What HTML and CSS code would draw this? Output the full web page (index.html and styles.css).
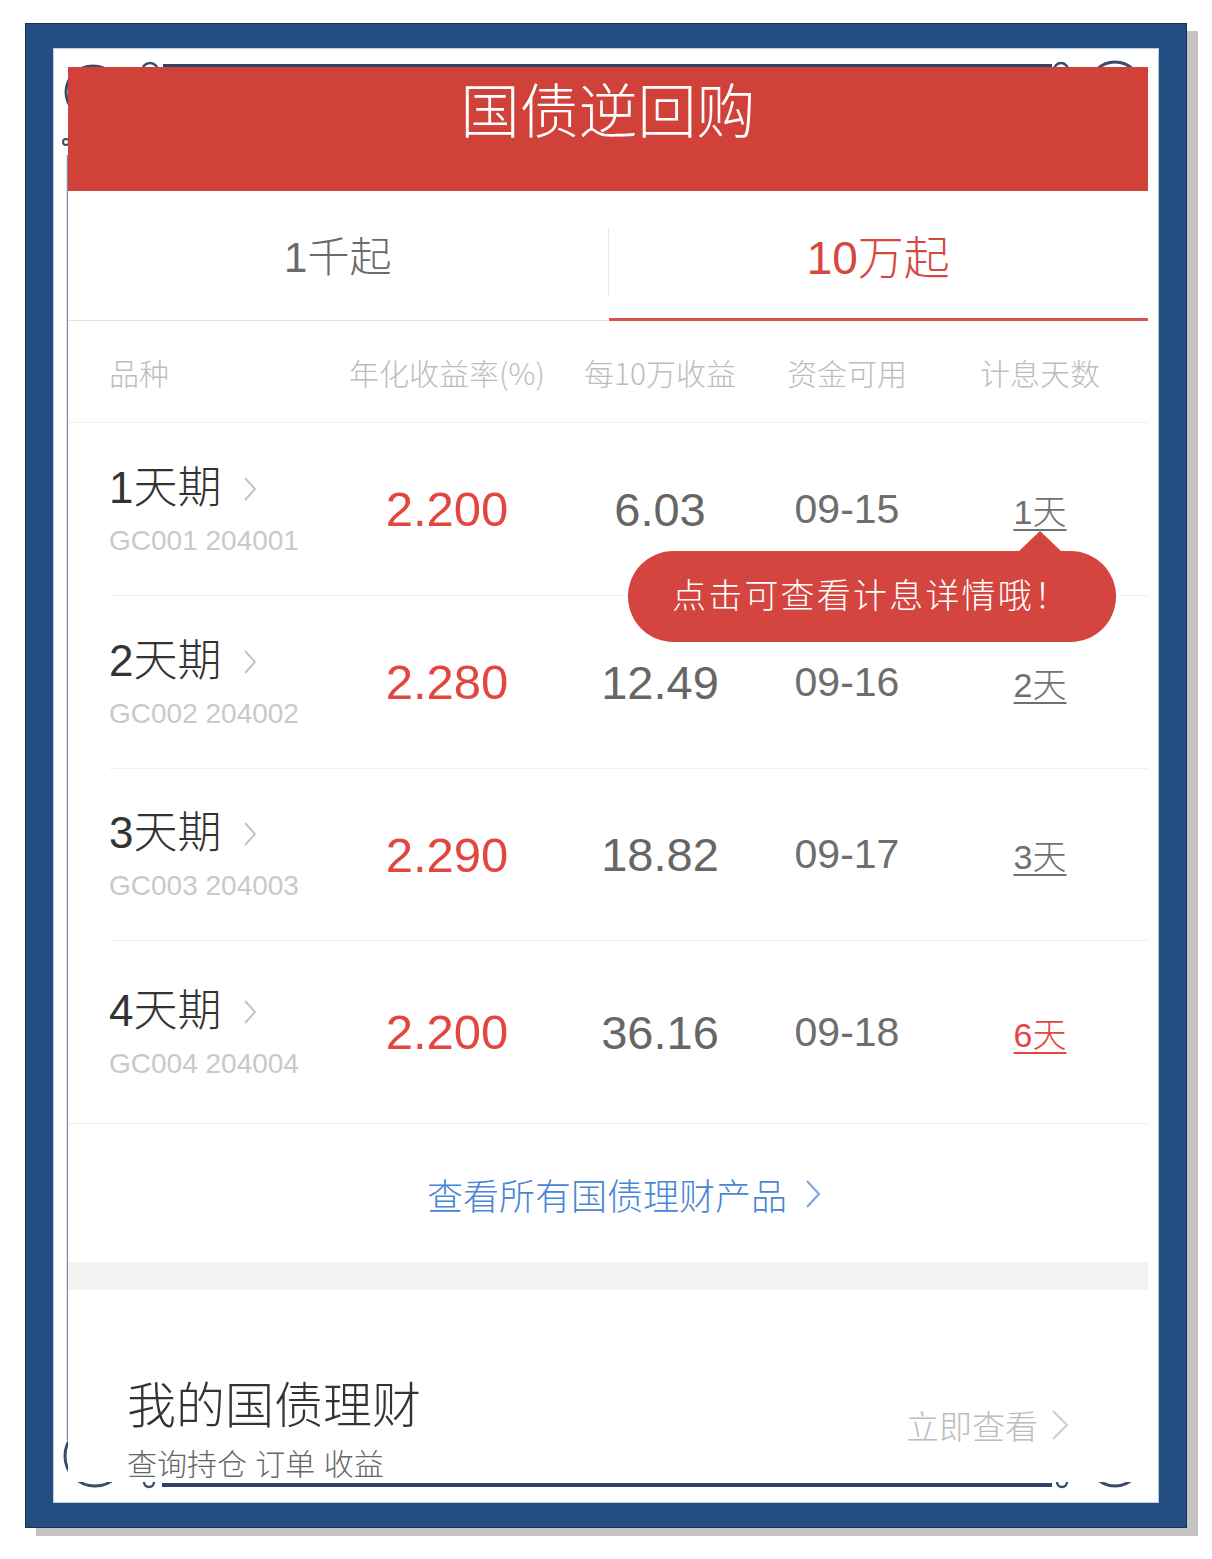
FILE: index.html
```html
<!DOCTYPE html>
<html lang="zh-CN">
<head>
<meta charset="utf-8">
<title>国债逆回购</title>
<link rel="stylesheet" href="styles.css">
</head>
<body>
<div class="frame">
  <div class="inner">
    <svg class="deco" width="1106" height="1455" viewBox="0 0 1106 1455" aria-hidden="true">
      <line x1="110" y1="17.5" x2="999" y2="17.5" stroke="#2d4466" stroke-width="3"/>
      <ellipse cx="40" cy="44" rx="27" ry="26" fill="none" stroke="#3b4c6b" stroke-width="3"/>
      <circle cx="97" cy="23" r="8" fill="none" stroke="#3b4c6b" stroke-width="2.5"/>
      <circle cx="13" cy="94" r="3" fill="none" stroke="#3b4c6b" stroke-width="2"/>
      <circle cx="1008" cy="22" r="7" fill="none" stroke="#3b4c6b" stroke-width="2.5"/>
      <ellipse cx="1062" cy="38" rx="25" ry="24" fill="none" stroke="#3b4c6b" stroke-width="3"/>
      <line x1="14.5" y1="107" x2="14.5" y2="1392" stroke="#7d8da8" stroke-width="1.5"/>
      <line x1="109" y1="1437" x2="999" y2="1437" stroke="#2d4466" stroke-width="4"/>
      <ellipse cx="42" cy="1408" rx="30" ry="30" fill="none" stroke="#3b4c6b" stroke-width="3"/>
      <circle cx="96" cy="1434" r="5" fill="none" stroke="#3b4c6b" stroke-width="2.5"/>
      <circle cx="1009" cy="1434" r="5" fill="none" stroke="#3b4c6b" stroke-width="2.5"/>
      <ellipse cx="1062" cy="1408" rx="28" ry="30" fill="none" stroke="#3b4c6b" stroke-width="3"/>
    </svg>
    <div class="phone">
      <header class="top">国债逆回购</header>
      <nav class="tabs">
        <div class="tab">1千起</div>
        <div class="tab-divider"></div>
        <div class="tab active">10万起</div>
      </nav>
      <div class="cols">
        <div class="c1">品种</div>
        <div class="cc">年化收益率(%)</div>
        <div class="cc">每10万收益</div>
        <div class="cc">资金可用</div>
        <div class="cc">计息天数</div>
      </div>
      <div class="list">
        <div class="row">
          <div class="name-cell">
            <div class="name">1天期<svg class="chev" width="14" height="26" viewBox="0 0 14 26"><path d="M2 2 L12 13 L2 24" fill="none" stroke="#c4c4c4" stroke-width="2"/></svg></div>
            <div class="code">GC001 204001</div>
          </div>
          <div class="val rate">2.200</div>
          <div class="val gain">6.03</div>
          <div class="val date">09-15</div>
          <div class="val"><span class="days">1天</span></div>
        </div>
        <div class="row">
          <div class="name-cell">
            <div class="name">2天期<svg class="chev" width="14" height="26" viewBox="0 0 14 26"><path d="M2 2 L12 13 L2 24" fill="none" stroke="#c4c4c4" stroke-width="2"/></svg></div>
            <div class="code">GC002 204002</div>
          </div>
          <div class="val rate">2.280</div>
          <div class="val gain">12.49</div>
          <div class="val date">09-16</div>
          <div class="val"><span class="days">2天</span></div>
        </div>
        <div class="row">
          <div class="name-cell">
            <div class="name">3天期<svg class="chev" width="14" height="26" viewBox="0 0 14 26"><path d="M2 2 L12 13 L2 24" fill="none" stroke="#c4c4c4" stroke-width="2"/></svg></div>
            <div class="code">GC003 204003</div>
          </div>
          <div class="val rate">2.290</div>
          <div class="val gain">18.82</div>
          <div class="val date">09-17</div>
          <div class="val"><span class="days">3天</span></div>
        </div>
        <div class="row last">
          <div class="name-cell">
            <div class="name">4天期<svg class="chev" width="14" height="26" viewBox="0 0 14 26"><path d="M2 2 L12 13 L2 24" fill="none" stroke="#c4c4c4" stroke-width="2"/></svg></div>
            <div class="code">GC004 204004</div>
          </div>
          <div class="val rate">2.200</div>
          <div class="val gain">36.16</div>
          <div class="val date">09-18</div>
          <div class="val"><span class="days red">6天</span></div>
        </div>
      </div>
      <div class="more">查看所有国债理财产品<svg class="chev-blue" width="16" height="30" viewBox="0 0 16 30"><path d="M2 2 L14 15 L2 28" fill="none" stroke="#7ea7e0" stroke-width="2.2"/></svg></div>
      <div class="band"></div>
      <div class="mine">
        <div class="mine-text">
          <div class="mine-title">我的国债理财</div>
          <div class="mine-sub">查询持仓 订单 收益</div>
        </div>
        <div class="mine-link">立即查看<svg class="chev-gray" width="20" height="32" viewBox="0 0 20 32"><path d="M3 2 L17 16 L3 30" fill="none" stroke="#cfcfcf" stroke-width="2.2"/></svg></div>
      </div>
      <div class="tip">点击可查看计息详情哦！</div>
    </div>
  </div>
</div>
</body>
</html>
```
FILE: styles.css
```css
* { box-sizing: border-box; }
html, body { margin: 0; padding: 0; background: #ffffff; }
body {
  font-family: "Liberation Sans", "Noto Sans CJK SC", sans-serif;
  width: 1212px;
  height: 1559px;
  overflow: hidden;
}
.frame {
  margin: 23px 0 0 25px;
  width: 1162px;
  height: 1505px;
  background: #244d82;
  border: 1px solid #1c3150;
  padding: 24px 27px 24px 27px;
  box-shadow: 11px 8px 0 0 #c3c3c3;
}
.inner {
  position: relative;
  width: 1106px;
  height: 1455px;
  background: #ffffff;
  box-shadow: inset 0 0 0 1px #b9cfe6;
  padding: 19px 11px 21px 15px;
}
.deco { position: absolute; left: 0; top: 0; z-index: 0; }
.phone {
  position: relative;
  z-index: 1;
  width: 1080px;
  background: #ffffff;
}
.top {
  height: 124px;
  background: #cf4139;
  color: #ffffff;
  font-family: "Noto Sans CJK SC", sans-serif;
  font-weight: 300;
  font-size: 59px;
  line-height: 60px;
  text-align: center;
  padding-top: 11px;
}
.tabs {
  display: flex;
  height: 130px;
}
.tab {
  flex: 1;
  display: flex;
  align-items: center;
  justify-content: center;
  border-bottom: 1px solid #e4e4e4;
  color: #6a6a6a;
  font-size: 42px;
  font-weight: 300;
  padding-bottom: 4px;
}
.tab.active {
  color: #d6473f;
  font-size: 46px;
  border-bottom: 3px solid #d9524b;
  padding-bottom: 2px;
}
.tab-divider {
  width: 1px;
  height: 68px;
  margin-top: 38px;
  background: #e6e6e6;
}
.cols, .row {
  display: grid;
  grid-template-columns: 226px 224px 202px 172px 214px;
  align-items: center;
}
.cols {
  height: 102px;
  padding-left: 41px;
  border-bottom: 1px solid #f1f1f1;
  color: #bdbdbd;
  font-family: "Noto Sans CJK SC", sans-serif;
  font-size: 30px;
  font-weight: 300;
  white-space: nowrap;
}
.cc { text-align: center; }
.list { padding-left: 41px; }
.row {
  height: 173px;
  border-bottom: 1px solid #f1f1f1;
}
.row:nth-child(3) { height: 172px; }
.row.last { height: 182px; border-bottom: none; }
.name {
  display: flex;
  align-items: center;
  font-size: 44px;
  line-height: 56px;
  color: #333333;
  font-weight: 300;
  white-space: nowrap;
}
.chev { margin-left: 22px; margin-top: 2px; }
.code {
  margin-top: 7px;
  font-size: 28px;
  line-height: 36px;
  color: #c9c9c9;
  white-space: nowrap;
}
.val {
  text-align: center;
  color: #666666;
  white-space: nowrap;
}
.rate { font-size: 49px; color: #e2463f; }
.gain { font-size: 47px; color: #666666; }
.date { font-size: 41px; color: #6e6e6e; }
.days {
  font-size: 34px;
  color: #707070;
  text-decoration: underline;
  text-underline-offset: 5px;
  text-decoration-thickness: 2px;
  font-weight: 300;
}
.days.red { color: #e2463f; }
.more {
  height: 139px;
  border-top: 1px solid #f1f1f1;
  display: flex;
  align-items: center;
  justify-content: center;
  color: #4a86d6;
  font-size: 36px;
  font-weight: 300;
  padding-left: 32px;
  padding-top: 2px;
}
.chev-blue { margin-left: 18px; }
.band {
  height: 28px;
  background: #f2f2f2;
}
.mine {
  height: 192px;
  display: flex;
  justify-content: space-between;
  padding-left: 59px;
  padding-right: 78px;
  background: #ffffff;
}
.mine-text { padding-top: 88px; }
.mine-title {
  font-size: 49px;
  line-height: 56px;
  color: #333333;
  font-weight: 300;
  white-space: nowrap;
}
.mine-sub {
  margin-top: 14px;
  font-size: 30px;
  line-height: 34px;
  color: #666666;
  font-weight: 300;
  white-space: nowrap;
}
.mine-link {
  margin-top: 113px;
  height: 44px;
  display: flex;
  align-items: center;
  font-size: 33px;
  color: #bdbdbd;
  font-weight: 300;
  white-space: nowrap;
}
.chev-gray { margin-left: 12px; }
.tip {
  position: absolute;
  left: 560px;
  top: 484px;
  width: 488px;
  height: 91px;
  border-radius: 46px;
  background: #d4453f;
  color: #ffffff;
  font-size: 34px;
  line-height: 91px;
  padding-left: 44px;
  letter-spacing: 2.2px;
  font-weight: 300;
  white-space: nowrap;
}
.tip::before {
  content: "";
  position: absolute;
  left: 390px;
  top: -20px;
  border-left: 22px solid transparent;
  border-right: 22px solid transparent;
  border-bottom: 21px solid #d4453f;
}
```
